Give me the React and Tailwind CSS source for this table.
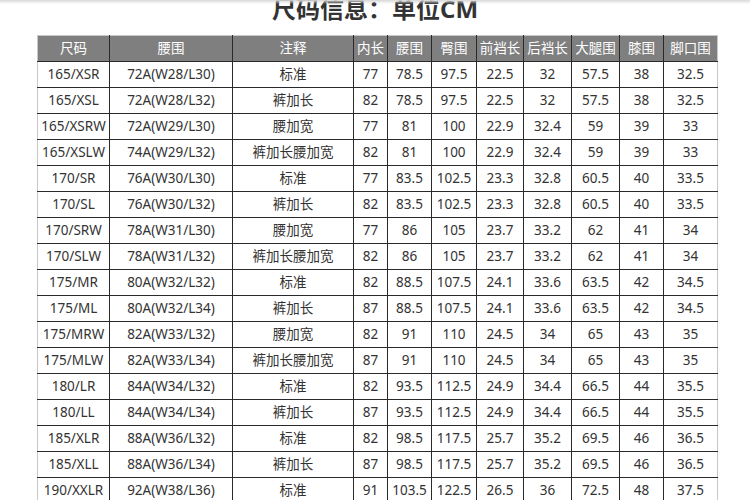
import React from 'react';

const cols = [72, 123, 121, 34, 44, 45, 47, 48, 48, 44, 54];
const head = ['尺码', '腰围', '注释', '内长', '腰围', '臀围', '前裆长', '后裆长', '大腿围', '膝围', '脚口围'];

const rows = [
  ['165/XSR', '72A(W28/L30)', '标准', '77', '78.5', '97.5', '22.5', '32', '57.5', '38', '32.5'],
  ['165/XSL', '72A(W28/L32)', '裤加长', '82', '78.5', '97.5', '22.5', '32', '57.5', '38', '32.5'],
  ['165/XSRW', '72A(W29/L30)', '腰加宽', '77', '81', '100', '22.9', '32.4', '59', '39', '33'],
  ['165/XSLW', '74A(W29/L32)', '裤加长腰加宽', '82', '81', '100', '22.9', '32.4', '59', '39', '33'],
  ['170/SR', '76A(W30/L30)', '标准', '77', '83.5', '102.5', '23.3', '32.8', '60.5', '40', '33.5'],
  ['170/SL', '76A(W30/L32)', '裤加长', '82', '83.5', '102.5', '23.3', '32.8', '60.5', '40', '33.5'],
  ['170/SRW', '78A(W31/L30)', '腰加宽', '77', '86', '105', '23.7', '33.2', '62', '41', '34'],
  ['170/SLW', '78A(W31/L32)', '裤加长腰加宽', '82', '86', '105', '23.7', '33.2', '62', '41', '34'],
  ['175/MR', '80A(W32/L32)', '标准', '82', '88.5', '107.5', '24.1', '33.6', '63.5', '42', '34.5'],
  ['175/ML', '80A(W32/L34)', '裤加长', '87', '88.5', '107.5', '24.1', '33.6', '63.5', '42', '34.5'],
  ['175/MRW', '82A(W33/L32)', '腰加宽', '82', '91', '110', '24.5', '34', '65', '43', '35'],
  ['175/MLW', '82A(W33/L34)', '裤加长腰加宽', '87', '91', '110', '24.5', '34', '65', '43', '35'],
  ['180/LR', '84A(W34/L32)', '标准', '82', '93.5', '112.5', '24.9', '34.4', '66.5', '44', '35.5'],
  ['180/LL', '84A(W34/L34)', '裤加长', '87', '93.5', '112.5', '24.9', '34.4', '66.5', '44', '35.5'],
  ['185/XLR', '88A(W36/L32)', '标准', '82', '98.5', '117.5', '25.7', '35.2', '69.5', '46', '36.5'],
  ['185/XLL', '88A(W36/L34)', '裤加长', '87', '98.5', '117.5', '25.7', '35.2', '69.5', '46', '36.5'],
  ['190/XXLR', '92A(W38/L36)', '标准', '91', '103.5', '122.5', '26.5', '36', '72.5', '48', '37.5'],
];

const font = { fontFamily: '"Noto Sans", "Noto Sans CJK SC", sans-serif' };

export default function App() {
  return (
    <div className="relative w-[750px] h-[500px] overflow-hidden bg-white" style={font}>
      {/* faint shadow along the top edge */}
      <div className="absolute top-0 left-0 right-0 h-[4px] bg-gradient-to-b from-[#d8d8d8] to-transparent" />

      <div className="h-[35px] flex justify-center">
        <div className="-mt-[3px] text-[24px] leading-[24px] font-bold text-[#333]">尺码信息：单位CM</div>
      </div>

      <table className="ml-[37px] table-fixed border-collapse text-[13.5px] text-[#333]">
        <colgroup>
          {cols.map((w, i) => (
            <col key={i} style={{ width: w }} />
          ))}
        </colgroup>
        <thead>
          <tr className="h-[26px] bg-[#7f7f7f] text-white">
            {head.map((h, i) => (
              <th
                key={i}
                className={`font-normal text-center whitespace-nowrap border border-[#2a2a2a] border-t-[#c8c8c8] p-0 ${
                  i === 0 ? 'border-l-[#c8c8c8]' : ''
                } ${i === head.length - 1 ? 'border-r-[#c8c8c8]' : ''}`}
              >
                {h}
              </th>
            ))}
          </tr>
        </thead>
        <tbody>
          {rows.map((r, ri) => (
            <tr key={ri} className="h-[26px]">
              {r.map((c, i) => (
                <td
                  key={i}
                  className={`text-center whitespace-nowrap border border-[#2a2a2a] p-0 ${
                    i === 0 ? 'border-l-[#c8c8c8]' : ''
                  } ${i === r.length - 1 ? 'border-r-[#c8c8c8]' : ''}`}
                >
                  {c}
                </td>
              ))}
            </tr>
          ))}
        </tbody>
      </table>
    </div>
  );
}
